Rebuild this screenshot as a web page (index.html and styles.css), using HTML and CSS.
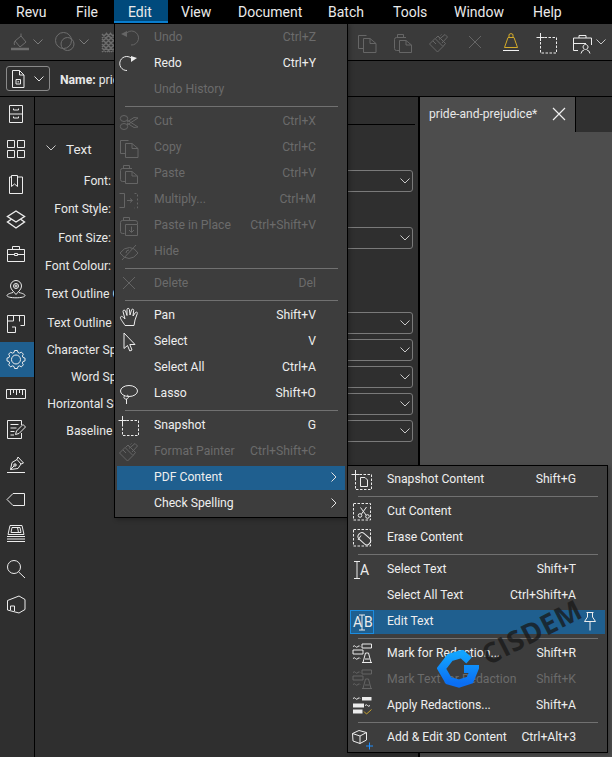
FILE: index.html
```html
<!DOCTYPE html>
<html lang="en">
<head>
<meta charset="utf-8">
<title>Revu</title>
<link rel="stylesheet" href="styles.css">
</head>
<body>
<svg class="defs" width="0" height="0" aria-hidden="true">
  <defs>
    <symbol id="copy" viewBox="0 0 24 26"><path d="M8.5 19.5H3.5V6.5H11.5M8.5 9.5V23.5H21V14.5L15 9.5ZM15 9.5V14.5H21"/></symbol>
    <symbol id="paste" viewBox="0 0 24 26"><path d="M8.5 21.5H5.5Q3.500 21.500 3.500 19.500V10.500Q3.500 8.500 5.500 8.500H15M6.500 8V5.500H12.500V8M8.500 11.500V23.500H20.500V16L15 11.500ZM15 11.500V16H20.500"/></symbol>
    <symbol id="brush" viewBox="0 0 24 26"><path d="M2.500 15L8 9.500L16 17.500L10.500 23ZM8.500 9.500L11 7L18.500 14.500L16 17.500M11 7L13 9.500M6 12L9 15M12 10.500L18 5.500L20.500 8L15 14M13.500 6.500L14.500 5.500"/></symbol>
    <symbol id="x" viewBox="0 0 24 26"><path d="M6 7L18 19M18 7L6 19"/></symbol>
    <symbol id="bars" viewBox="0 0 24 26"><path d="M3 6.500q1.500-1.500 2.500 0t2.500 0 2 0" /><path class="solid" d="M12 4h9.500v4H12zM3 10h10v4H3z"/><path d="M3 18.500q1.500-1.500 2.500 0t2.500 0 2 0M12 22.500H22M13 22.500L15.500 13H18.500L21 22.500M15 19H19.500"/></symbol>
  </defs>
</svg>
<div class="app">
  <nav class="menubar">
    <span class="top">Revu</span><span class="top">File</span><span class="top active">Edit</span><span class="top after">View</span><span class="top">Document</span><span class="top">Batch</span><span class="top">Tools</span><span class="top">Window</span><span class="top">Help</span>
  </nav>

  <div class="toolbar">
    <div class="tgroup dim">
      <svg class="ic" width="24" height="24" viewBox="0 0 24 24"><path d="M8 11L14 6L19 12L13 17ZM14 6V3.500M8 11Q6.500 13 7.500 15"/><path class="band" d="M4 19H22"/></svg>
      <svg class="chev first" width="10" height="6" viewBox="0 0 10 6"><path d="M.5.5L5 5L9.500.5"/></svg>
      <svg class="ic second" width="24" height="24" viewBox="0 0 24 24"><circle cx="10.500" cy="10.500" r="8"/><circle cx="14.500" cy="14" r="6.500"/></svg>
      <svg class="chev first" width="10" height="6" viewBox="0 0 10 6"><path d="M.5.500L5 5L9.500.500"/></svg>
      <svg class="ic third" width="24" height="24" viewBox="0 0 24 24"><path class="hatch" d="M6 4L19 17M6 9L19 22M6 14L14 22M10 3L19 12M6 18L10 22M14 3L19 8M19 4L6 17M19 9L6 22M19 14L11 22M15 3L6 12M19 18L15 22M11 3L6 8"/></svg>
    </div>
    <div class="tgroup right">
      <svg class="ic dimmer" width="24" height="26"><use href="#copy"/></svg>
      <svg class="ic dimmer" width="24" height="26"><use href="#paste"/></svg>
      <svg class="ic dimmer" width="24" height="26"><use href="#brush"/></svg>
      <svg class="ic dimmer" width="24" height="26"><use href="#x"/></svg>
      <svg class="ic gold" width="24" height="26" viewBox="0 0 24 26"><path d="M5.500 18.500L9 8.500H15L18.500 18.500ZM10 8.500V5.500Q12 3.500 14 5.500V8.500"/><path class="paper" d="M4 21.500H20"/></svg>
      <svg class="ic" width="24" height="26" viewBox="0 0 24 26"><rect x="5.500" y="8.500" width="16" height="15.500" stroke-dasharray="2.500 1.500"/><path d="M5.500 4V12M1.500 8.500H9.500"/></svg>
      <svg class="ic" width="24" height="26" viewBox="0 0 24 26"><path d="M7 21.500H2.500V9H20.500V16M8 9V6.500H15V9M2.500 14.500H15M14.500 20.500a2.500 2.500 0 1 1 .1 0M10 24.500Q11 21 13 21M19 24.500Q18 21 16 21"/></svg>
      <svg class="chev kit" width="10" height="6" viewBox="0 0 10 6"><path d="M.5.500L5 5L9.500.500"/></svg>
    </div>
  </div>

  <div class="namebar">
    <button class="docbtn" type="button">
      <svg class="ic" width="16" height="20" viewBox="0 0 16 20"><path d="M2.500 1.500H9.500L14 6V18.500H2.500ZM9.500 1.500V6H14"/><path d="M6 10.500H10.500V15H6ZM8.200 12V13.500"/></svg>
      <svg class="chev btnchev" width="10" height="6" viewBox="0 0 10 6"><path d="M.5.500L5 5L9.500.500"/></svg>
    </button>
    <span class="name"><b>Name:</b> prid</span>
  </div>

  <div class="main">
    <aside class="rail">
      <div class="railitem"><svg class="ic" width="22" height="23" viewBox="0 0 22 23"><path d="M4.500 2.500H17.500V19.500H4.500ZM4.500 11H17.500M8.500 5.500V7H13.500V5.500M8.500 13.500V15H13.500V13.500"/></svg></div>
      <div class="railitem"><svg class="ic" width="22" height="23" viewBox="0 0 22 23"><path d="M2.500 2.500H9.500V9.500H2.500ZM12.500 2.500H19.500V9.500H12.500ZM2.500 12.500H9.500V19.500H2.500ZM12.500 12.500H19.500V19.500H12.500Z"/></svg></div>
      <div class="railitem"><svg class="ic" width="22" height="23" viewBox="0 0 22 23"><path d="M6.500 4H4.500V20.500H17.500V4H12.500M6.500 2.500H12.500V13.500L9.500 11L6.500 13.500Z"/></svg></div>
      <div class="railitem"><svg class="ic bold" width="22" height="23" viewBox="0 0 22 23"><path d="M11 3L19.500 8.500L11 14L2.500 8.500ZM6 11.500L2.500 14L11 20L19.500 14L16 11.500"/></svg></div>
      <div class="railitem"><svg class="ic" width="22" height="23" viewBox="0 0 22 23"><path d="M2.500 6.500H19.500V18.500H2.500ZM7.500 6.500V3.500H14.500V6.500M2.500 11.500H9.500M12.500 11.500H19.500M9.500 10.500H12.500V12.500H9.500Z"/></svg></div>
      <div class="railitem"><svg class="ic" width="22" height="23" viewBox="0 0 22 23"><path d="M11 16.500C8 13 5.500 11 5.500 8A5.500 5.500 0 0 1 16.500 8C16.500 11 14 13 11 16.500ZM8 14.500C4 15.500 2 16.500 2 17.500C2 19 6 19.800 11 19.800S20 19 20 17.500C20 16.500 18 15.500 14 14.500"/><circle cx="11" cy="8" r="2.500"/><path d="M11 6.500V9.500M9.500 8H12.500"/></svg></div>
      <div class="railitem"><svg class="ic" width="22" height="23" viewBox="0 0 22 23"><path d="M2.500 11V2.500H19.500V12.500H15.500M14.500 2.500V8.500M8.500 2.500V8H2.500M2.500 11V19.500H10.500V14H7"/></svg></div>
      <div class="railitem on"><svg class="ic" width="22" height="23" viewBox="0 0 22 23"><g transform="translate(11 11.500)"><path d="M-2-7L-1.400-9H1.400L2-7L3.540-6.360L5.370-7.350L7.350-5.370L6.360-3.540L7-2L9-1.400V1.400L7 2L6.360 3.540L7.350 5.370L5.370 7.350L3.540 6.360L2 7L1.400 9H-1.400L-2 7L-3.540 6.360L-5.370 7.350L-7.350 5.370L-6.360 3.540L-7 2L-9 1.400V-1.400L-7-2L-6.360-3.540L-7.350-5.370L-5.370-7.350L-3.540-6.360Z"/><circle r="4.500"/></g></svg></div>
      <div class="railitem"><svg class="ic" width="22" height="23" viewBox="0 0 22 23"><path d="M1.500 6.500H20.500V15.500H1.500ZM5.500 6.500V12M8.500 6.500V10M11.500 6.500V12M14.500 6.500V10M17.500 6.500V12"/></svg></div>
      <div class="railitem"><svg class="ic" width="22" height="23" viewBox="0 0 22 23"><path d="M16.500 7V2.500H2.500V20.500H16.500V15M5.500 6.500H13.500M5.500 10H11.500M5.500 13.500H9.500M5.500 17H9M10.500 16.500L11.500 13L18 6.500L20.500 9L14 15.500Z"/></svg></div>
      <div class="railitem"><svg class="ic" width="22" height="23" viewBox="0 0 22 23"><path d="M2 19.500H20M5.500 16.500L7 9.500L12 6.500L16 11L13 15.500ZM5.500 16.500L9 13M12 6.500L13 4L18.500 10L16 11M9 11H11V13H9Z"/></svg></div>
      <div class="railitem"><svg class="ic" width="22" height="23" viewBox="0 0 22 23"><path d="M2 11.500L8 5.500H19.500V17.500H8Z"/></svg></div>
      <div class="railitem"><svg class="ic" width="22" height="23" viewBox="0 0 22 23"><path d="M5 2.500H17L19 11.500H3ZM7 4.500H15L16 9.500H6ZM12.500 4.500L13.500 9.500M2 13.500H20M2 16H20M2 18.500H20"/></svg></div>
      <div class="railitem"><svg class="ic" width="22" height="23" viewBox="0 0 22 23"><circle cx="9" cy="9" r="6.500"/><path d="M13.500 13.800L20 20"/></svg></div>
      <div class="railitem"><svg class="ic" width="22" height="23" viewBox="0 0 22 23"><path d="M2.500 7.500L14 3L20 6.500V16.500L14 20L2.500 17ZM5.500 13H9.500V18M5.500 13V17"/></svg></div>
    </aside>

    <section class="panel">
      <div class="panelhead"></div>
      <div class="sectitle">
        <svg class="chev" width="10" height="6" viewBox="0 0 10 6"><path d="M.5.500L5 5L9.500.500"/></svg>
        <span>Text</span>
      </div>
      <div class="props">
        <div class="prop"><label class="lb">Font:</label><div class="sel"><svg class="chev" width="10" height="6" viewBox="0 0 10 6"><path d="M.5.500L5 5L9.500.500"/></svg></div></div>
        <div class="prop tall"><label class="lb">Font Style:</label></div>
        <div class="prop"><label class="lb">Font Size:</label><div class="sel"><svg class="chev" width="10" height="6" viewBox="0 0 10 6"><path d="M.5.500L5 5L9.500.500"/></svg></div></div>
        <div class="prop"><label class="lb">Font Colour:</label></div>
        <div class="prop tall"><label class="lb w1">Text Outline Colour:</label></div>
        <div class="prop low"><label class="lb w2">Text Outline Width:</label><div class="sel"><svg class="chev" width="10" height="6" viewBox="0 0 10 6"><path d="M.5.500L5 5L9.500.500"/></svg></div></div>
        <div class="prop low"><label class="lb w3">Character Spacing:</label><div class="sel"><svg class="chev" width="10" height="6" viewBox="0 0 10 6"><path d="M.5.500L5 5L9.500.500"/></svg></div></div>
        <div class="prop low"><label class="lb w3">Word Spacing:</label><div class="sel"><svg class="chev" width="10" height="6" viewBox="0 0 10 6"><path d="M.5.500L5 5L9.500.500"/></svg></div></div>
        <div class="prop low"><label class="lb w3">Horizontal Scaling:</label><div class="sel"><svg class="chev" width="10" height="6" viewBox="0 0 10 6"><path d="M.5.500L5 5L9.500.500"/></svg></div></div>
        <div class="prop low"><label class="lb w4">Baseline Offset:</label><div class="sel"><svg class="chev" width="10" height="6" viewBox="0 0 10 6"><path d="M.5.500L5 5L9.500.500"/></svg></div></div>
      </div>
    </section>

    <section class="doc">
      <div class="tabs">
        <div class="tab">
          <span>pride-and-prejudice*</span>
          <svg class="tabx" width="14" height="14" viewBox="0 0 14 14"><path d="M1 1L13 13M13 1L1 13"/></svg>
        </div>
      </div>
      <div class="page"></div>
    </section>
  </div>

  <div class="menu editmenu">
    <div class="row off"><svg class="ic" width="24" height="26" viewBox="0 0 24 26"><path d="M8.500 10.500A7 7 0 1 1 14 21"/><path class="solid" d="M4 10L10 7V13Z"/></svg><span>Undo</span><span class="key">Ctrl+Z</span><i></i></div>
    <div class="row"><svg class="ic" width="24" height="26" viewBox="0 0 24 26"><path d="M15.500 9.500A7 7 0 1 0 10 20.500"/><path class="solid" d="M20 8L14 6V12Z"/></svg><span>Redo</span><span class="key">Ctrl+Y</span><i></i></div>
    <div class="row off"><i></i><span>Undo History</span><span class="key"></span><i></i></div>
    <div class="sep"></div>
    <div class="row off"><svg class="ic" width="24" height="26" viewBox="0 0 24 26"><ellipse cx="7" cy="10.500" rx="3.700" ry="3"/><ellipse cx="7" cy="18.500" rx="3.700" ry="3"/><path d="M10 12L21 19L17 19.500L10 15M10 17L21 10L17 9.500L10 14"/></svg><span>Cut</span><span class="key">Ctrl+X</span><i></i></div>
    <div class="row off"><svg class="ic" width="24" height="26"><use href="#copy"/></svg><span>Copy</span><span class="key">Ctrl+C</span><i></i></div>
    <div class="row off"><svg class="ic" width="24" height="26"><use href="#paste"/></svg><span>Paste</span><span class="key">Ctrl+V</span><i></i></div>
    <div class="row off"><svg class="ic" width="24" height="26" viewBox="0 0 24 26"><path d="M2.500 7.500H7.500V21.500H2.500M10 14.500H15M13 12.500L15.500 14.500L13 16.500"/><path stroke-dasharray="2 2" d="M17.500 7.500H20.500V22H17.500"/></svg><span>Multiply...</span><span class="key">Ctrl+M</span><i></i></div>
    <div class="row off"><svg class="ic" width="24" height="26" viewBox="0 0 24 26"><path d="M7.500 21.500H5.500Q3.500 21.500 3.500 19.500V10.500Q3.500 8.500 5.500 8.500H18Q20.500 8.500 20.500 10.500V12M6.500 8V5.500H12.500V8M8.500 12.500H20.500V23.500H8.500ZM14.500 14.500V20M12 18L14.500 20.500L17 18"/></svg><span>Paste in Place</span><span class="key">Ctrl+Shift+V</span><i></i></div>
    <div class="row off"><svg class="ic" width="24" height="26" viewBox="0 0 24 26"><path d="M3 15Q7 9.500 12.500 9.500Q17.500 9.500 21 15Q17 20.500 12 20.500Q7 20.500 3 15ZM5 22L19 7M9 15Q9 12 12 12"/></svg><span>Hide</span><span class="key"></span><i></i></div>
    <div class="sep"></div>
    <div class="row off"><svg class="ic" width="24" height="26"><use href="#x"/></svg><span>Delete</span><span class="key">Del</span><i></i></div>
    <div class="sep"></div>
    <div class="row"><svg class="ic" width="24" height="26" viewBox="0 0 24 26"><path d="M8 23.500C6 20 3 17 3.500 15C4.500 13.500 6 15 8 17L6 9.500C5.800 8 7.800 7.500 8.500 9L10 13.500L10 7.500C10 6 12.200 6 12.400 7.500L13 13L14.500 8C14.800 6.600 16.800 7 16.700 8.400L16 14L18.500 10.500C19.200 9.500 20.700 10.200 20.300 11.500L18 18L17 23.500Z"/></svg><span>Pan</span><span class="key">Shift+V</span><i></i></div>
    <div class="row"><svg class="ic" width="24" height="26" viewBox="0 0 24 26"><path d="M7 5V20.500L10.500 17.500L12.800 23L15 22L12.800 16.500L18 16.500Z"/></svg><span>Select</span><span class="key">V</span><i></i></div>
    <div class="row"><i></i><span>Select All</span><span class="key">Ctrl+A</span><i></i></div>
    <div class="row"><svg class="ic" width="24" height="26" viewBox="0 0 24 26"><ellipse cx="12" cy="11" rx="8.500" ry="5.500"/><path d="M8 15.500C6 17 7 19.500 9.500 19C12 18.500 12 15.500 10 15M9.500 19V24"/></svg><span>Lasso</span><span class="key">Shift+O</span><i></i></div>
    <div class="sep"></div>
    <div class="row"><svg class="ic" width="24" height="26" viewBox="0 0 24 26"><rect x="5.500" y="8.500" width="16" height="15" stroke-dasharray="2.500 1.500"/><path d="M5.500 4V12.500M1.500 8.500H9.500"/></svg><span>Snapshot</span><span class="key">G</span><i></i></div>
    <div class="row off"><svg class="ic" width="24" height="26"><use href="#brush"/></svg><span>Format Painter</span><span class="key">Ctrl+Shift+C</span><i></i></div>
    <div class="row hi"><i></i><span>PDF Content</span><span class="key"></span><svg class="arrow" width="6" height="10" viewBox="0 0 6 10"><path d="M.5.500L5 5L.5 9.500"/></svg></div>
    <div class="row"><i></i><span>Check Spelling</span><span class="key"></span><svg class="arrow" width="6" height="10" viewBox="0 0 6 10"><path d="M.5.500L5 5L.5 9.500"/></svg></div>
  </div>

  <div class="menu submenu">
    <div class="row"><svg class="ic" width="24" height="26" viewBox="0 0 24 26"><rect x="5.500" y="8.500" width="16" height="15" stroke-dasharray="2.500 1.500"/><path d="M5.500 4V12.500M1.500 8.500H9.500M10.500 11.500H15L17.500 14V20.500H10.500Z"/></svg><span>Snapshot Content</span><span class="key">Shift+G</span><i></i></div>
    <div class="sep"></div>
    <div class="row"><svg class="ic" width="24" height="26" viewBox="0 0 24 26"><rect x="3.500" y="5.500" width="17" height="16.500" stroke-dasharray="2.500 1.500"/><circle cx="10" cy="17.500" r="1.800"/><circle cx="17.500" cy="18.500" r="1.800"/><path d="M11.500 16L16.500 9M16 17L10.500 9.500"/></svg><span>Cut Content</span><span class="key"></span><i></i></div>
    <div class="row"><svg class="ic" width="24" height="26" viewBox="0 0 24 26"><rect x="3.500" y="5.500" width="17" height="16.500" stroke-dasharray="2.500 1.500"/><rect x="7.500" y="11" width="14" height="7.500" rx="3.500" transform="rotate(42 14.500 14.500)"/><path d="M11 11.500L8 16"/></svg><span>Erase Content</span><span class="key"></span><i></i></div>
    <div class="sep"></div>
    <div class="row"><svg class="ic" width="24" height="26" viewBox="0 0 24 26"><path d="M4 5.500H10M4 22.500H10M7 5.500V22.500"/><text class="gly" x="10" y="19">A</text></svg><span>Select Text</span><span class="key">Shift+T</span><i></i></div>
    <div class="row"><i></i><span>Select All Text</span><span class="key">Ctrl+Shift+A</span><i></i></div>
    <div class="row hi"><svg class="ic" width="24" height="26" viewBox="0 0 24 26"><rect class="blue" x=".5" y="2.500" width="23" height="23"/><path d="M9 7H15M9 22H15M12 7V22"/><text class="gly" x="3" y="19">A</text><text class="gly" x="14" y="19">B</text></svg><span>Edit Text</span><span class="key"></span><svg class="ic pin" width="16" height="20" viewBox="0 0 16 20"><path d="M4.500 1.500H11.500M5.500 1.500V6L2.500 10.500H13.500L10.500 6V1.500M8 10.500V19.500"/></svg></div>
    <div class="sep"></div>
    <div class="row"><svg class="ic" width="24" height="26"><use href="#bars"/></svg><span>Mark for Redaction...</span><span class="key">Shift+R</span><i></i></div>
    <div class="row off"><svg class="ic" width="24" height="26"><use href="#bars"/></svg><span>Mark Text for Redaction</span><span class="key">Shift+K</span><i></i></div>
    <div class="row"><svg class="ic" width="24" height="26" viewBox="0 0 24 26"><path d="M3 6.500q1.500-1.500 2.500 0t2.500 0 2 0M15 13.500q1.500-1.500 2.500 0t2.500 0"/><path class="solid" d="M12 5h9.500v3.500H12zM3 11.500h11v4H3zM3 17.500h9.500v4H3z"/><path class="check" d="M14 19.500L16.500 22L21.500 17.500"/></svg><span>Apply Redactions...</span><span class="key">Shift+A</span><i></i></div>
    <div class="sep"></div>
    <div class="row"><svg class="ic" width="24" height="26" viewBox="0 0 24 26"><path d="M2.500 9.500L9 6.500L16.500 8.500V16L10 19.500L3 17ZM2.500 9.500L10 12L16.500 8.500M10 12V19.500"/><path class="plus" d="M16 22H23M19.500 18.500V25.500"/></svg><span>Add &amp; Edit 3D Content</span><span class="key">Ctrl+Alt+3</span><i></i></div>
  </div>

  <div class="mark">
    <svg class="logo" width="42" height="38" viewBox="0 0 42 38">
      <defs><linearGradient id="lg" x1="0" y1="0" x2="0" y2="1"><stop offset="0" stop-color="#12a4ff"/><stop offset="1" stop-color="#0b6ef2"/></linearGradient></defs>
      <path d="M32 10.500L25 4L13 7.500L4.500 18.500L11.500 30.500L22 33.500L33 30L37.500 19L27 19" fill="none" stroke="url(#lg)" stroke-width="8"/>
    </svg>
    <span class="cisdem">CISDEM</span>
  </div>
</div>
</body>
</html>
```
FILE: styles.css
```css
* { box-sizing: border-box; }
html, body { margin: 0; padding: 0; background: #2f2f2f; }
.defs { position: absolute; }
.app {
  position: relative;
  width: 612px;
  height: 757px;
  overflow: hidden;
  display: flex;
  flex-direction: column;
  font-family: Roboto, "Liberation Sans", sans-serif;
  font-size: 12px;
  color: #e8e8e8;
}
svg { display: block; flex: none; }
.ic { fill: none; stroke: currentColor; stroke-width: 1; color: #ececec; }
.ic .solid { fill: currentColor; stroke: none; }
.ic .band { stroke-width: 2.500; }
.ic .hatch { stroke-width: 1.500; }
.ic.bold { stroke-width: 1.400; }
.ic .gly { fill: currentColor; stroke: none; font: 14px Roboto, sans-serif; }
.ic .blue { stroke: #1b8ce0; }
.ic .check { stroke: #c7a22f; }
.ic .plus { stroke: #1f8fff; }
.ic .paper { stroke: #f2f2f2; }
.chev { fill: none; stroke: #c8c8c8; stroke-width: 1; }

.menubar { flex: none; height: 24px; background: #000; display: grid; grid-template-columns: 60px 52px 54px 56px 90px 65px 61px 79px 1fr; padding-left: 2px; font-size: 14px; }
.top { padding-left: 14px; height: 23px; line-height: 24px; color: #eaeaea; }
.top.active { background: #004a7c; border-bottom: 2px solid #0a80d2; }
.top.after { padding-left: 13px; }

.toolbar { flex: none; height: 37px; background: #3a3a3a; border-bottom: 1px solid #000; display: flex; align-items: center; justify-content: space-between; }
.tgroup { display: flex; align-items: center; padding-left: 7px; }
.tgroup.dim .ic { color: #6e6e6e; }
.tgroup.dim .chev { stroke: #7c7c7c; }
.tgroup.right { gap: 12px; padding: 0 6px 0 0; }
.dimmer.ic { color: #666; }
.gold.ic { color: #d4ab2a; }
.first { margin-left: 2px; }
.second { margin-left: 10px; }
.third { margin-left: 7px; }
.chev.kit { margin-left: -11px; }

.namebar { flex: none; height: 36px; background: #303030; border-bottom: 1px solid #000; display: flex; align-items: center; padding-left: 6px; }
.docbtn { width: 44px; height: 25px; padding: 0 0 0 3px; background: transparent; border: 1px solid #8a8a8a; border-radius: 3px; display: flex; align-items: center; gap: 8px; }
.docbtn .chev { stroke: #e0e0e0; }
.name { margin: 2px 0 0 10px; font-size: 12.200px; white-space: nowrap; }
.name b { font-weight: 700; }

.main { flex: 1; display: flex; min-height: 0; }
.rail { flex: none; width: 35px; background: #2f2f2f; border-right: 1px solid #000; }
.railitem { height: 35px; display: flex; align-items: center; justify-content: center; padding-right: 2px; }
.railitem.on { background: #1f5f8f; }

.panel { flex: none; width: 385px; background: #2f2f2f; border-right: 2px solid #000; }
.panelhead { height: 28px; margin-right: 3px; border-bottom: 1px solid #000; }
.sectitle { display: flex; align-items: center; gap: 10px; height: 45px; padding-left: 11px; font-size: 13.500px; }
.sectitle span { padding-top: 2px; }
.props { display: flex; flex-direction: column; padding-right: 5px; }
.prop { display: flex; height: 28px; align-items: flex-start; justify-content: space-between; }
.prop.tall { height: 29px; }
.prop.low { height: 27px; }
.lb { width: 76px; text-align: right; white-space: nowrap; flex: none; font-size: 12.200px; line-height: 22px; color: #e8e8e8; }
.lb.w1 { width: 116px; }
.lb.w2 { width: 114px; }
.lb.w3 { width: 114px; }
.lb.w4 { width: 117px; }
.sel { flex: none; width: 245px; height: 22px; background: #2f2f2f; border: 1px solid #7a7a7a; border-radius: 3px; display: flex; align-items: center; justify-content: flex-end; padding-right: 2px; }

.doc { flex: 1; display: flex; flex-direction: column; min-width: 0; background: #4d4d4d; }
.tabs { flex: none; height: 35px; background: #303030; display: flex; }
.tab { width: 156px; background: #4d4d4d; border-right: 1px solid #000; display: flex; align-items: flex-start; padding: 10px 0 0 9px; font-size: 12.100px; gap: 15px; }
.tabx { margin-top: 0; fill: none; stroke: #eee; stroke-width: 1.200; }
.page { flex: 1; }

.menu { position: absolute; background: #3d3d3d; border: 1px solid #000; box-shadow: 2px 2px 4px rgba(0, 0, 0, .25); font-size: 12.200px; }
.editmenu { left: 114px; top: 23px; width: 234px; height: 495px; padding: 0 2px; }
.submenu { left: 347px; top: 465px; width: 261px; height: 288px; padding: 0 2px; }
.row { display: grid; grid-template-columns: 37px 1fr auto 29px; align-items: center; height: 26px; color: #eee; line-height: 26px; white-space: nowrap; }
.row .key { text-align: right; }
.row.off { color: #6b6b6b; }
.row.off .ic { color: #656565; }
.row.hi { background: linear-gradient(transparent 2px, #1f5f8f 2px); }
.arrow { fill: none; stroke: #e4e4e4; stroke-width: 1; margin-left: 15px; }
.pin { margin-left: 6px; }
.sep { height: 6px; padding-top: 4px; margin: 0 7px 0 8px; }
.sep::before { content: ""; display: block; height: 1px; background: #717171; }

.mark { position: absolute; left: 437px; top: 650px; width: 42px; height: 38px; }
.cisdem { position: absolute; left: 46px; top: -13px; font: 700 28px "Open Sans", sans-serif; letter-spacing: .5px; color: rgba(24, 24, 24, .75); transform: rotate(-27deg); transform-origin: 0 50%; white-space: nowrap; }
```
